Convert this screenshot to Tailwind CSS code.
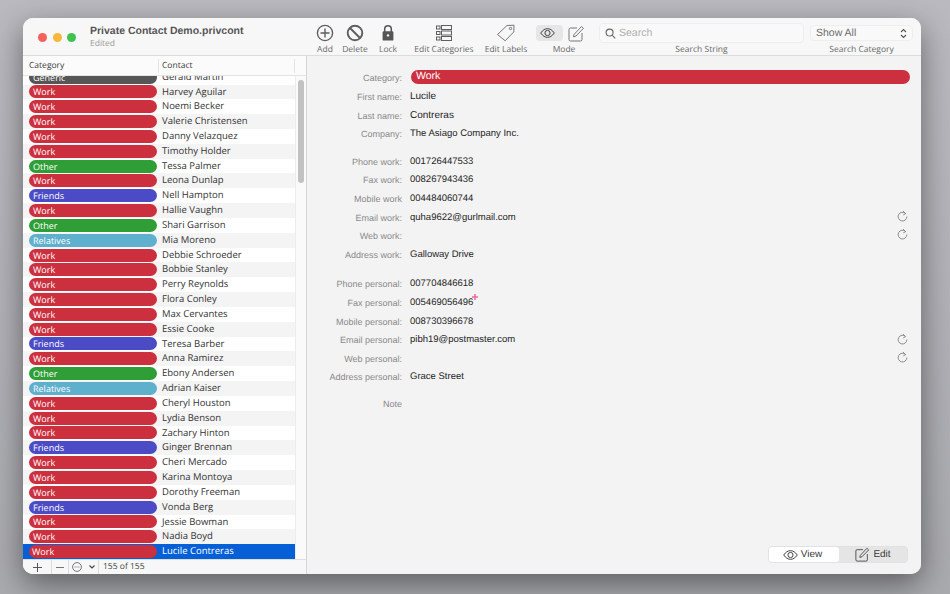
<!DOCTYPE html>
<html>
<head>
<meta charset="utf-8">
<script src="https://cdn.jsdelivr.net/npm/@tailwindcss/browser@4"></script>
</head>
<body class="m-0">
<div class="w-[950px] h-[594px] overflow-hidden bg-gradient-to-b from-[#b9b9bf] to-[#a9aaae] pt-[18px] pl-[23px] font-['Liberation_Sans',sans-serif] [text-rendering:geometricPrecision]">
  <div class="w-[898px] h-[556px] rounded-[10px] overflow-hidden bg-[#f3f3f3] flex flex-col shadow-[0_10px_30px_rgba(0,0,0,0.45)]">

    <!-- Toolbar -->
    <div class="h-[38px] shrink-0 bg-[#f7f7f7] border-b border-[#dcdcdc] flex items-start relative">
      <div class="flex gap-[5.500px] ml-[15px] mt-[15px]">
        <div class="w-[9px] h-[9px] rounded-full bg-[#f4605a]"></div>
        <div class="w-[9px] h-[9px] rounded-full bg-[#f6b73c]"></div>
        <div class="w-[9px] h-[9px] rounded-full bg-[#3fc24f]"></div>
      </div>
      <div class="ml-[14px] mt-[7px] w-[220px] shrink-0">
        <div class="text-[10.500px] leading-[13px] font-bold text-[#555]">Private Contact Demo.privcont</div>
        <div class="text-[8.500px] leading-[12px] text-[#9a9a9a] font-['Open_Sans',sans-serif]">Edited</div>
      </div>
      <div class="flex items-start text-[8.500px] leading-[11px] text-[#6a6a6a] font-['Open_Sans',sans-serif]">
        <div class="w-[30px] flex flex-col items-center mt-[6px]">
          <svg class="w-[18px] h-[18px]" viewBox="0 0 18 18" fill="none" stroke="#5e5e5e" stroke-width="1.4"><circle cx="9" cy="9" r="7.6"/><path d="M9 4.5v9M4.5 9h9"/></svg>
          <span class="mt-[2px]">Add</span>
        </div>
        <div class="w-[30px] flex flex-col items-center mt-[6px]">
          <svg class="w-[18px] h-[18px]" viewBox="0 0 18 18" fill="none" stroke="#5e5e5e" stroke-width="1.9"><circle cx="9" cy="9" r="7.3"/><path d="M4 4l10 10"/></svg>
          <span class="mt-[2px]">Delete</span>
        </div>
        <div class="w-[30px] ml-[3px] flex flex-col items-center mt-[6px]">
          <svg class="w-[18px] h-[18px]" viewBox="0 0 18 18"><path d="M5.7 8V5a3.3 3.3 0 0 1 6.6 0v3" fill="none" stroke="#555" stroke-width="1.5"/><rect x="3.6" y="7.2" width="10.8" height="9.4" rx="1.2" fill="#555"/><circle cx="9" cy="11.4" r="1.2" fill="#f7f7f7"/></svg>
          <span class="mt-[2px]">Lock</span>
        </div>
        <div class="w-[76px] ml-[3px] flex flex-col items-center mt-[6px]">
          <svg class="w-[18px] h-[18px]" viewBox="0 0 18 18" fill="none" stroke="#5e5e5e" stroke-width="1"><rect x="1.5" y="2" width="3.5" height="3"/><rect x="1.5" y="7.5" width="3.5" height="3"/><rect x="1.5" y="13" width="3.5" height="3"/><rect x="6.5" y="1.5" width="10" height="4"/><rect x="6.5" y="7" width="10" height="4"/><rect x="6.5" y="12.5" width="10" height="4"/></svg>
          <span class="mt-[2px]">Edit Categories</span>
        </div>
        <div class="w-[44px] ml-[2px] flex flex-col items-center mt-[6px]">
          <svg class="w-[20px] h-[18px]" viewBox="0 0 20 18" fill="none" stroke="#777" stroke-width="1"><path d="M1.5 10.5L11 1.5l7-.3-.2 6.6-8.6 9z"/><circle cx="14.5" cy="4.5" r="1.2"/></svg>
          <span class="mt-[2px]">Edit Labels</span>
        </div>
        <div class="w-[56px] ml-[8px] flex flex-col items-center mt-[6px]">
          <div class="flex items-center h-[18px] w-full">
            <div class="w-[27px] h-[16px] rounded-[4px] bg-[#e6e6e6] flex items-center justify-center pr-[4px]">
              <svg class="w-[15px] h-[10px] shrink-0" viewBox="0 0 15 10" fill="none" stroke="#444" stroke-width="1"><path d="M.7 5C3 1.8 5 .7 7.5.7S12 1.8 14.3 5C12 8.2 10 9.3 7.5 9.3S3 8.200 .7 5z"/><circle cx="7.500" cy="5" r="2.600"/></svg>
            </div>
            <svg class="w-[17px] h-[17px] ml-[5px]" viewBox="0 0 17 17" fill="none" stroke="#777" stroke-width="1"><path d="M9 3H2.500A1.500 1.500 0 0 0 1 4.500v10A1.500 1.500 0 0 0 2.500 16h10a1.500 1.500 0 0 0 1.500-1.500V8"/><path d="M6 9.500L13.500 1.500l2 1.800L8 11l-2.500.8z"/></svg>
          </div>
          <span class="mt-[2px]">Mode</span>
        </div>
        <div class="w-[205px] ml-[7px] flex flex-col items-center mt-[5px]">
          <div class="w-[205px] h-[20px] rounded-[4px] bg-[#f9f9f9] border border-[#eeeeee] flex items-center pl-[5px] text-[10.500px] text-[#b0b0b0] font-['Liberation_Sans',sans-serif]">
            <svg class="w-[11px] h-[11px] mr-[3px]" viewBox="0 0 12 12" fill="none" stroke="#666" stroke-width="1.200"><circle cx="5" cy="5" r="3.800"/><path d="M8 8l3.200 3.200"/></svg>
            <span>Search</span>
          </div>
          <span class="mt-[1px]">Search String</span>
        </div>
        <div class="w-[103px] ml-[6px] flex flex-col items-center mt-[7px]">
          <div class="w-[103px] h-[16px] rounded-[4px] bg-[#f9f9f9] border border-[#eeeeee] flex items-center justify-between pl-[5px] pr-[5px] text-[10.500px] text-[#6e6e6e] font-['Liberation_Sans',sans-serif]">
            <span>Show All</span>
            <svg class="w-[7px] h-[11px]" viewBox="0 0 7 11" fill="none" stroke="#555" stroke-width="1.100"><path d="M1 4l2.500-2.500L6 4M1 7l2.500 2.500L6 7"/></svg>
          </div>
          <span class="mt-[3px] whitespace-nowrap">Search Category</span>
        </div>
      </div>
    </div>

    <div class="flex flex-1 min-h-0">
      <!-- Left list -->
      <div class="w-[284px] shrink-0 border-r border-[#d6d6d6] flex flex-col bg-white font-['Open_Sans',sans-serif] text-[9.500px] relative">
        <div class="h-[20px] shrink-0 bg-[#fbfbfb] border-b border-[#e4e4e4] flex items-center pt-[1px] text-[#3c3c3c] text-[8.500px] relative z-10">
          <div class="w-[136px] pl-[6px] border-r border-[#e4e4e4] h-[14px] leading-[14px]">Category</div>
          <div class="w-[136px] pl-[3px] border-r border-[#e4e4e4] h-[14px] leading-[14px]">Contact</div>
        </div>
        <div class="flex-1 min-h-0 flex overflow-hidden">
          <div class="w-[272px] shrink-0 overflow-hidden flex flex-col justify-end leading-[14.840px] text-[#333]">
            <div class="h-[14.840px] shrink-0 flex items-center bg-white"><div class="ml-[6px] w-[128px] h-[13px] rounded-full bg-[#565656] text-white text-[9px] font-medium pl-[4px] leading-[13px]">Generic</div><div class="ml-[5px]">Gerald Martin</div></div>
            <div class="h-[14.840px] shrink-0 flex items-center bg-[#f4f4f4]"><div class="ml-[6px] w-[128px] h-[13px] rounded-full bg-[#cc2f3d] text-white text-[9px] font-medium pl-[4px] leading-[13px]">Work</div><div class="ml-[5px]">Harvey Aguilar</div></div>
            <div class="h-[14.840px] shrink-0 flex items-center bg-white"><div class="ml-[6px] w-[128px] h-[13px] rounded-full bg-[#cc2f3d] text-white text-[9px] font-medium pl-[4px] leading-[13px]">Work</div><div class="ml-[5px]">Noemi Becker</div></div>
            <div class="h-[14.840px] shrink-0 flex items-center bg-[#f4f4f4]"><div class="ml-[6px] w-[128px] h-[13px] rounded-full bg-[#cc2f3d] text-white text-[9px] font-medium pl-[4px] leading-[13px]">Work</div><div class="ml-[5px]">Valerie Christensen</div></div>
            <div class="h-[14.840px] shrink-0 flex items-center bg-white"><div class="ml-[6px] w-[128px] h-[13px] rounded-full bg-[#cc2f3d] text-white text-[9px] font-medium pl-[4px] leading-[13px]">Work</div><div class="ml-[5px]">Danny Velazquez</div></div>
            <div class="h-[14.840px] shrink-0 flex items-center bg-[#f4f4f4]"><div class="ml-[6px] w-[128px] h-[13px] rounded-full bg-[#cc2f3d] text-white text-[9px] font-medium pl-[4px] leading-[13px]">Work</div><div class="ml-[5px]">Timothy Holder</div></div>
            <div class="h-[14.840px] shrink-0 flex items-center bg-white"><div class="ml-[6px] w-[128px] h-[13px] rounded-full bg-[#2f9e36] text-white text-[9px] font-medium pl-[4px] leading-[13px]">Other</div><div class="ml-[5px]">Tessa Palmer</div></div>
            <div class="h-[14.840px] shrink-0 flex items-center bg-[#f4f4f4]"><div class="ml-[6px] w-[128px] h-[13px] rounded-full bg-[#cc2f3d] text-white text-[9px] font-medium pl-[4px] leading-[13px]">Work</div><div class="ml-[5px]">Leona Dunlap</div></div>
            <div class="h-[14.840px] shrink-0 flex items-center bg-white"><div class="ml-[6px] w-[128px] h-[13px] rounded-full bg-[#4c4bc6] text-white text-[9px] font-medium pl-[4px] leading-[13px]">Friends</div><div class="ml-[5px]">Nell Hampton</div></div>
            <div class="h-[14.840px] shrink-0 flex items-center bg-[#f4f4f4]"><div class="ml-[6px] w-[128px] h-[13px] rounded-full bg-[#cc2f3d] text-white text-[9px] font-medium pl-[4px] leading-[13px]">Work</div><div class="ml-[5px]">Hallie Vaughn</div></div>
            <div class="h-[14.840px] shrink-0 flex items-center bg-white"><div class="ml-[6px] w-[128px] h-[13px] rounded-full bg-[#2f9e36] text-white text-[9px] font-medium pl-[4px] leading-[13px]">Other</div><div class="ml-[5px]">Shari Garrison</div></div>
            <div class="h-[14.840px] shrink-0 flex items-center bg-[#f4f4f4]"><div class="ml-[6px] w-[128px] h-[13px] rounded-full bg-[#5fb0cc] text-white text-[9px] font-medium pl-[4px] leading-[13px]">Relatives</div><div class="ml-[5px]">Mia Moreno</div></div>
            <div class="h-[14.840px] shrink-0 flex items-center bg-white"><div class="ml-[6px] w-[128px] h-[13px] rounded-full bg-[#cc2f3d] text-white text-[9px] font-medium pl-[4px] leading-[13px]">Work</div><div class="ml-[5px]">Debbie Schroeder</div></div>
            <div class="h-[14.840px] shrink-0 flex items-center bg-[#f4f4f4]"><div class="ml-[6px] w-[128px] h-[13px] rounded-full bg-[#cc2f3d] text-white text-[9px] font-medium pl-[4px] leading-[13px]">Work</div><div class="ml-[5px]">Bobbie Stanley</div></div>
            <div class="h-[14.840px] shrink-0 flex items-center bg-white"><div class="ml-[6px] w-[128px] h-[13px] rounded-full bg-[#cc2f3d] text-white text-[9px] font-medium pl-[4px] leading-[13px]">Work</div><div class="ml-[5px]">Perry Reynolds</div></div>
            <div class="h-[14.840px] shrink-0 flex items-center bg-[#f4f4f4]"><div class="ml-[6px] w-[128px] h-[13px] rounded-full bg-[#cc2f3d] text-white text-[9px] font-medium pl-[4px] leading-[13px]">Work</div><div class="ml-[5px]">Flora Conley</div></div>
            <div class="h-[14.840px] shrink-0 flex items-center bg-white"><div class="ml-[6px] w-[128px] h-[13px] rounded-full bg-[#cc2f3d] text-white text-[9px] font-medium pl-[4px] leading-[13px]">Work</div><div class="ml-[5px]">Max Cervantes</div></div>
            <div class="h-[14.840px] shrink-0 flex items-center bg-[#f4f4f4]"><div class="ml-[6px] w-[128px] h-[13px] rounded-full bg-[#cc2f3d] text-white text-[9px] font-medium pl-[4px] leading-[13px]">Work</div><div class="ml-[5px]">Essie Cooke</div></div>
            <div class="h-[14.840px] shrink-0 flex items-center bg-white"><div class="ml-[6px] w-[128px] h-[13px] rounded-full bg-[#4c4bc6] text-white text-[9px] font-medium pl-[4px] leading-[13px]">Friends</div><div class="ml-[5px]">Teresa Barber</div></div>
            <div class="h-[14.840px] shrink-0 flex items-center bg-[#f4f4f4]"><div class="ml-[6px] w-[128px] h-[13px] rounded-full bg-[#cc2f3d] text-white text-[9px] font-medium pl-[4px] leading-[13px]">Work</div><div class="ml-[5px]">Anna Ramirez</div></div>
            <div class="h-[14.840px] shrink-0 flex items-center bg-white"><div class="ml-[6px] w-[128px] h-[13px] rounded-full bg-[#2f9e36] text-white text-[9px] font-medium pl-[4px] leading-[13px]">Other</div><div class="ml-[5px]">Ebony Andersen</div></div>
            <div class="h-[14.840px] shrink-0 flex items-center bg-[#f4f4f4]"><div class="ml-[6px] w-[128px] h-[13px] rounded-full bg-[#5fb0cc] text-white text-[9px] font-medium pl-[4px] leading-[13px]">Relatives</div><div class="ml-[5px]">Adrian Kaiser</div></div>
            <div class="h-[14.840px] shrink-0 flex items-center bg-white"><div class="ml-[6px] w-[128px] h-[13px] rounded-full bg-[#cc2f3d] text-white text-[9px] font-medium pl-[4px] leading-[13px]">Work</div><div class="ml-[5px]">Cheryl Houston</div></div>
            <div class="h-[14.840px] shrink-0 flex items-center bg-[#f4f4f4]"><div class="ml-[6px] w-[128px] h-[13px] rounded-full bg-[#cc2f3d] text-white text-[9px] font-medium pl-[4px] leading-[13px]">Work</div><div class="ml-[5px]">Lydia Benson</div></div>
            <div class="h-[14.840px] shrink-0 flex items-center bg-white"><div class="ml-[6px] w-[128px] h-[13px] rounded-full bg-[#cc2f3d] text-white text-[9px] font-medium pl-[4px] leading-[13px]">Work</div><div class="ml-[5px]">Zachary Hinton</div></div>
            <div class="h-[14.840px] shrink-0 flex items-center bg-[#f4f4f4]"><div class="ml-[6px] w-[128px] h-[13px] rounded-full bg-[#4c4bc6] text-white text-[9px] font-medium pl-[4px] leading-[13px]">Friends</div><div class="ml-[5px]">Ginger Brennan</div></div>
            <div class="h-[14.840px] shrink-0 flex items-center bg-white"><div class="ml-[6px] w-[128px] h-[13px] rounded-full bg-[#cc2f3d] text-white text-[9px] font-medium pl-[4px] leading-[13px]">Work</div><div class="ml-[5px]">Cheri Mercado</div></div>
            <div class="h-[14.840px] shrink-0 flex items-center bg-[#f4f4f4]"><div class="ml-[6px] w-[128px] h-[13px] rounded-full bg-[#cc2f3d] text-white text-[9px] font-medium pl-[4px] leading-[13px]">Work</div><div class="ml-[5px]">Karina Montoya</div></div>
            <div class="h-[14.840px] shrink-0 flex items-center bg-white"><div class="ml-[6px] w-[128px] h-[13px] rounded-full bg-[#cc2f3d] text-white text-[9px] font-medium pl-[4px] leading-[13px]">Work</div><div class="ml-[5px]">Dorothy Freeman</div></div>
            <div class="h-[14.840px] shrink-0 flex items-center bg-[#f4f4f4]"><div class="ml-[6px] w-[128px] h-[13px] rounded-full bg-[#4c4bc6] text-white text-[9px] font-medium pl-[4px] leading-[13px]">Friends</div><div class="ml-[5px]">Vonda Berg</div></div>
            <div class="h-[14.840px] shrink-0 flex items-center bg-white"><div class="ml-[6px] w-[128px] h-[13px] rounded-full bg-[#cc2f3d] text-white text-[9px] font-medium pl-[4px] leading-[13px]">Work</div><div class="ml-[5px]">Jessie Bowman</div></div>
            <div class="h-[14.840px] shrink-0 flex items-center bg-[#f4f4f4]"><div class="ml-[6px] w-[128px] h-[13px] rounded-full bg-[#cc2f3d] text-white text-[9px] font-medium pl-[4px] leading-[13px]">Work</div><div class="ml-[5px]">Nadia Boyd</div></div>
            <div class="h-[14.840px] shrink-0 flex items-center bg-[#0560d8] text-white"><div class="ml-[6px] w-[128px] h-[13px] rounded-full bg-[#cc2f3d] text-white text-[9px] font-medium pl-[3px] leading-[13px]">Work</div><div class="ml-[5px]">Lucile Contreras</div></div>
          </div>
          <div class="flex-1 bg-[#fafafa] border-l border-[#ececec] pt-[4px] pl-[2px]">
            <div class="w-[6px] h-[103px] rounded-full bg-[#c2c2c2]"></div>
          </div>
        </div>
        <!-- Footer -->
        <div class="h-[15px] shrink-0 bg-[#f7f7f7] border-t border-[#dedede] flex items-center text-[8.500px] text-[#444]">
          <div class="w-[29px] h-full flex items-center justify-center border-r border-[#dcdcdc]"><svg class="w-[9px] h-[9px]" viewBox="0 0 9 9" stroke="#555" stroke-width="1"><path d="M4.500 0v9M0 4.500h9"/></svg></div>
          <div class="w-[17px] h-full flex items-center justify-center border-r border-[#dcdcdc]"><svg class="w-[8px] h-[9px]" viewBox="0 0 8 9" stroke="#777" stroke-width="1"><path d="M0 4.500h8"/></svg></div>
          <div class="w-[30px] h-full flex items-center pl-[3px] border-r border-[#dcdcdc]">
            <svg class="w-[10px] h-[10px]" viewBox="0 0 10 10" fill="none" stroke="#555" stroke-width=".8"><circle cx="5" cy="5" r="4.400"/><path d="M2.600 5h1M4.500 5h1M6.400 5h1"/></svg>
            <svg class="w-[6px] h-[4px] ml-[7px]" viewBox="0 0 6 4" fill="none" stroke="#444" stroke-width="1.100"><path d="M.5.500L3 3 5.500.500"/></svg>
          </div>
          <div class="ml-[4px] whitespace-nowrap">155 of 155</div>
        </div>
      </div>

      <!-- Detail -->
      <div class="flex-1 min-w-0 bg-[#f3f3f3] relative pt-[14px] pr-[11px] text-[9px] leading-[18.600px] text-[#8a8a8a]">
        <div class="flex items-start h-[14px] mb-[4px]"><div class="w-[95px] text-right shrink-0 leading-[16px]">Category:</div><div class="ml-[9px] flex-1 h-[14px] rounded-full bg-[#cc2f3d] text-white text-[10.500px] leading-[13px] pl-[5px]">Work</div></div>
        <div class="flex"><div class="w-[95px] text-right shrink-0">First name:</div><div class="ml-[8px] text-[#1e1e1e] text-[10px]">Lucile</div></div>
        <div class="flex"><div class="w-[95px] text-right shrink-0">Last name:</div><div class="ml-[8px] text-[#1e1e1e] text-[10px]">Contreras</div></div>
        <div class="flex"><div class="w-[95px] text-right shrink-0">Company:</div><div class="ml-[8px] text-[#1e1e1e] text-[9.500px]">The Asiago Company Inc.</div></div>
        <div class="h-[9px]"></div>
        <div class="flex"><div class="w-[95px] text-right shrink-0">Phone work:</div><div class="ml-[8px] text-[#1e1e1e] text-[9.500px]">001726447533</div></div>
        <div class="flex"><div class="w-[95px] text-right shrink-0">Fax work:</div><div class="ml-[8px] text-[#1e1e1e] text-[9.500px]">008267943436</div></div>
        <div class="flex"><div class="w-[95px] text-right shrink-0">Mobile work</div><div class="ml-[8px] text-[#1e1e1e] text-[9.500px]">004484060744</div></div>
        <div class="flex items-center"><div class="w-[95px] text-right shrink-0">Email work:</div><div class="ml-[8px] flex-1 text-[#1e1e1e] text-[9.500px]">quha9622@gurlmail.com</div>
          <svg class="w-[11px] h-[12px] shrink-0 mr-[2px] mb-[3px]" viewBox="0 0 10 11" fill="none" stroke="#8a8a8a" stroke-width=".9"><path d="M7.800 3.200A4 4 0 1 0 9 6"/><path d="M5.500 1L7.900 3.300 5.700 4.500"/></svg></div>
        <div class="flex items-center"><div class="w-[95px] text-right shrink-0">Web work:</div><div class="flex-1"></div>
          <svg class="w-[11px] h-[12px] shrink-0 mr-[2px] mb-[5px]" viewBox="0 0 10 11" fill="none" stroke="#8a8a8a" stroke-width=".9"><path d="M7.800 3.200A4 4 0 1 0 9 6"/><path d="M5.500 1L7.900 3.300 5.700 4.500"/></svg></div>
        <div class="flex"><div class="w-[95px] text-right shrink-0">Address work:</div><div class="ml-[8px] text-[#1e1e1e] text-[9.500px]">Galloway Drive</div></div>
        <div class="h-[11px]"></div>
        <div class="flex"><div class="w-[95px] text-right shrink-0">Phone personal:</div><div class="ml-[8px] text-[#1e1e1e] text-[9.500px]">007704846618</div></div>
        <div class="flex"><div class="w-[95px] text-right shrink-0">Fax personal:</div><div class="ml-[8px] text-[#1e1e1e] text-[9.500px] relative">005469056496<svg class="absolute left-[62px] top-0 w-[6px] h-[6px]" viewBox="0 0 6 6" stroke="#e86b94" stroke-width="1.500"><path d="M3 0v6M0 3h6"/></svg></div></div>
        <div class="flex"><div class="w-[95px] text-right shrink-0">Mobile personal:</div><div class="ml-[8px] text-[#1e1e1e] text-[9.500px]">008730396678</div></div>
        <div class="flex items-center"><div class="w-[95px] text-right shrink-0">Email personal:</div><div class="ml-[8px] flex-1 text-[#1e1e1e] text-[9.500px]">pibh19@postmaster.com</div>
          <svg class="w-[11px] h-[12px] shrink-0 mr-[2px] mb-[3px]" viewBox="0 0 10 11" fill="none" stroke="#8a8a8a" stroke-width=".9"><path d="M7.800 3.200A4 4 0 1 0 9 6"/><path d="M5.500 1L7.900 3.300 5.700 4.500"/></svg></div>
        <div class="flex items-center"><div class="w-[95px] text-right shrink-0">Web personal:</div><div class="flex-1"></div>
          <svg class="w-[11px] h-[12px] shrink-0 mr-[2px] mb-[5px]" viewBox="0 0 10 11" fill="none" stroke="#8a8a8a" stroke-width=".9"><path d="M7.800 3.200A4 4 0 1 0 9 6"/><path d="M5.500 1L7.900 3.300 5.700 4.500"/></svg></div>
        <div class="flex"><div class="w-[95px] text-right shrink-0">Address personal:</div><div class="ml-[8px] text-[#1e1e1e] text-[9.500px]">Grace Street</div></div>
        <div class="h-[8px]"></div>
        <div class="flex"><div class="w-[95px] text-right shrink-0">Note</div></div>

        <div class="absolute right-[13px] bottom-[11px] w-[140px] h-[17px] rounded-[4px] bg-[#e5e5e5] border border-[#e2e2e2] flex text-[10px] leading-[15px] text-[#3a3a3a]">
          <div class="w-[70px] rounded-[3px] bg-white flex items-center justify-center gap-[3px] pr-[3px]">
            <svg class="w-[15px] h-[10px]" viewBox="0 0 15 10" fill="none" stroke="#444" stroke-width="1"><path d="M.7 5C3 1.800 5 .700 7.500 .700S12 1.800 14.300 5C12 8.200 10 9.300 7.500 9.300S3 8.200 .700 5z"/><circle cx="7.500" cy="5" r="2.600"/></svg>
            <span>View</span>
          </div>
          <div class="flex-1 flex items-center justify-center gap-[3px]">
            <svg class="w-[15px] h-[15px]" viewBox="0 0 17 17" fill="none" stroke="#444" stroke-width="1"><path d="M9 3H2.500A1.500 1.500 0 0 0 1 4.500v10A1.500 1.500 0 0 0 2.500 16h10a1.500 1.500 0 0 0 1.500-1.500V8"/><path d="M6 9.500L13.500 1.500l2 1.800L8 11l-2.500.8z"/></svg>
            <span>Edit</span>
          </div>
        </div>
      </div>
    </div>
  </div>
</div>
</body>
</html>
